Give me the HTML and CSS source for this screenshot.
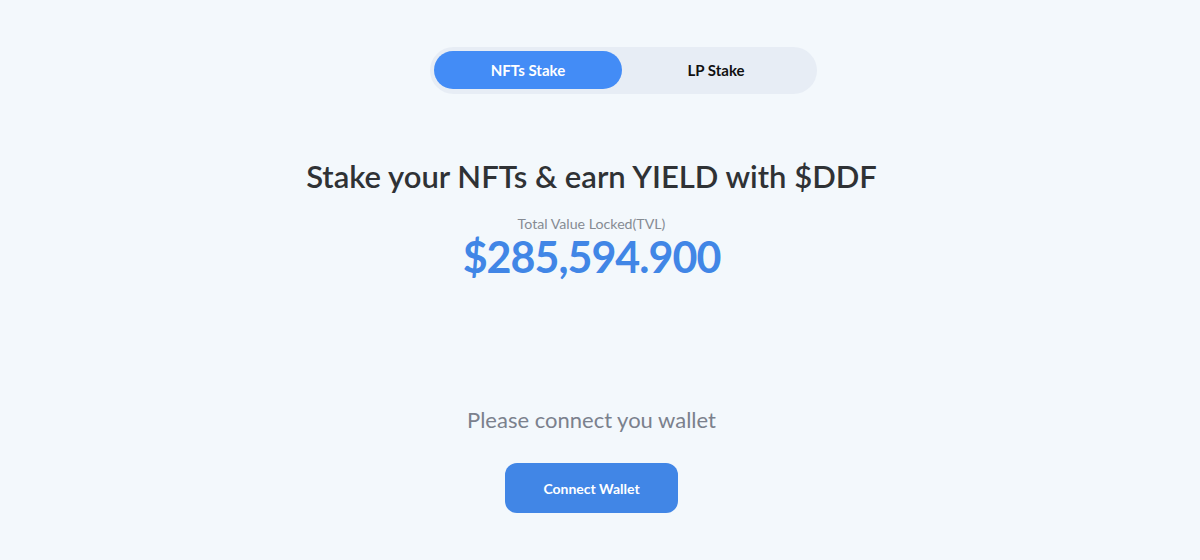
FILE: index.html
```html
<!DOCTYPE html>
<html lang="en">
<head>
<meta charset="utf-8">
<title>Stake</title>
<link rel="stylesheet" href="styles.css">
</head>
<body>
<main class="page">
  <div class="tabs">
    <button class="tab tab-active">NFTs Stake</button>
    <button class="tab">LP Stake</button>
  </div>
  <h1 class="title">Stake your NFTs &amp; earn YIELD with $DDF</h1>
  <div class="tvl-label">Total Value Locked(TVL)</div>
  <div class="tvl-value">$285,594.900</div>
  <p class="connect-text">Please connect you wallet</p>
  <button class="connect-btn">Connect Wallet</button>
</main>
</body>
</html>
```
FILE: styles.css
```css
html, body {
  margin: 0;
  padding: 0;
  background: #f3f8fc;
  font-family: Lato, "Open Sans", sans-serif;
}
.page {
  width: 1183px;
  height: 560px;
  display: flex;
  flex-direction: column;
  align-items: center;
  padding-top: 47px;
  box-sizing: border-box;
}
.tabs {
  display: flex;
  width: 387px;
  height: 47px;
  padding: 4px;
  box-sizing: border-box;
  background: #e7edf5;
  border-radius: 24px;
  margin-left: 64px;
}
.tab {
  flex: 0 0 188px;
  height: 38px;
  border: none;
  border-radius: 19px;
  background: transparent;
  font-family: inherit;
  font-weight: 700;
  font-size: 15px;
  color: #111;
  padding: 0;
}
.tab-active {
  background: #438cf6;
  color: #fff;
}
.title {
  margin: 62px 0 0;
  font-size: 31px;
  font-weight: 600;
  line-height: 40px;
  color: #2f3235;
}
.tvl-label {
  margin-top: 18px;
  font-size: 14.2px;
  line-height: 20px;
  color: #868b93;
}
.tvl-value {
  margin-top: 0;
  font-size: 43px;
  font-weight: 700;
  line-height: 46px;
  letter-spacing: -1px;
  color: #4186e6;
}
.connect-text {
  margin: 126px 0 0;
  font-size: 22px;
  line-height: 28px;
  color: #7b818d;
}
.connect-btn {
  margin-top: 29px;
  width: 173px;
  height: 50px;
  border: none;
  border-radius: 12px;
  background: #4186e6;
  color: #fff;
  font-family: inherit;
  font-weight: 700;
  font-size: 14px;
}
```
